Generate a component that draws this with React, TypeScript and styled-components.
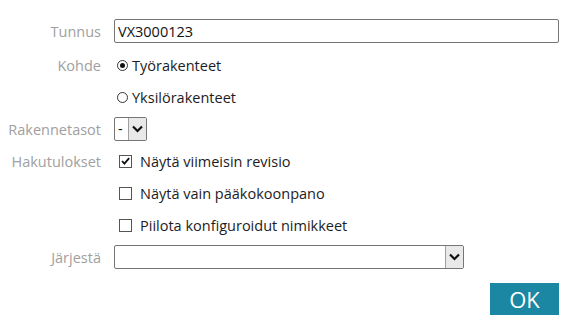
import { createGlobalStyle, styled } from "styled-components"

const Global = createGlobalStyle`
  html, body { margin: 0; padding: 0; background: #fff; }
  body { font-family: "Open Sans", "Noto Sans", sans-serif; font-size: 14.5px; color: #1c1c24; }
`

const Chevron = () => (
  <svg width="11" height="8" viewBox="0 0 11 8">
    <path d="M1 1.5 L5.5 6 L10 1.5" fill="none" stroke="#111" strokeWidth="2.2" />
  </svg>
)

const Check = () => (
  <svg width="12" height="12" viewBox="0 0 12 12">
    <path d="M2.2 6 L4.8 8.8 L10 2.8" fill="none" stroke="#111" strokeWidth="2" />
  </svg>
)

const Home = () => {
  return (
    <Form>
      <Global />
      <Row>
        <Label>Tunnus</Label>
        <TextInput defaultValue="VX3000123" />
      </Row>
      <Row $top={2}>
        <Label>Kohde</Label>
        <Option>
          <Radio $on />
          Työrakenteet
        </Option>
      </Row>
      <Row>
        <Label />
        <Option>
          <Radio />
          Yksilörakenteet
        </Option>
      </Row>
      <Row>
        <Label>Rakennetasot</Label>
        <Select $width={33}>
          <SelectValue>-</SelectValue>
          <Arrow>
            <Chevron />
          </Arrow>
        </Select>
      </Row>
      <Row>
        <Label>Hakutulokset</Label>
        <Option $gap={8}>
          <Box>
            <Check />
          </Box>
          Näytä viimeisin revisio
        </Option>
      </Row>
      <Row>
        <Label />
        <Option $gap={8}>
          <Box />
          Näytä vain pääkokoonpano
        </Option>
      </Row>
      <Row>
        <Label />
        <Option $gap={8}>
          <Box />
          Piilota konfiguroidut nimikkeet
        </Option>
      </Row>
      <Row>
        <Label>Järjestä</Label>
        <Select $width={350}>
          <SelectValue />
          <Arrow>
            <Chevron />
          </Arrow>
        </Select>
      </Row>
      <Footer>
        <OkButton>OK</OkButton>
      </Footer>
    </Form>
  )
}

export default Home

const Form = styled.div`
  width: 559px;
  padding-top: 19px;
  display: flex;
  flex-direction: column;
  gap: 8px;
`

const Row = styled.div<{ $top?: number }>`
  height: 24px;
  display: flex;
  align-items: center;
  gap: 13px;
  margin-top: ${(p) => p.$top ?? 0}px;
`

const Label = styled.div`
  width: 101px;
  flex-shrink: 0;
  text-align: right;
  color: #a0a0a0;
`

const TextInput = styled.input`
  flex: 1;
  box-sizing: border-box;
  height: 24px;
  border: 1px solid #767676;
  border-radius: 2px;
  padding: 0 3px;
  font-family: inherit;
  font-size: 14.5px;
  color: #111;
  outline: none;
`

const Option = styled.div<{ $gap?: number }>`
  display: flex;
  align-items: center;
  gap: ${(p) => p.$gap ?? 4}px;
  padding-left: ${(p) => (p.$gap ? 5 : 3)}px;
`

const Radio = styled.span<{ $on?: boolean }>`
  width: 11px;
  height: 11px;
  box-sizing: border-box;
  border: 1px solid #333;
  border-radius: 50%;
  display: flex;
  align-items: center;
  justify-content: center;
  &::after {
    content: "";
    width: 5px;
    height: 5px;
    border-radius: 50%;
    background: #111;
    display: ${(p) => (p.$on ? "block" : "none")};
  }
`

const Box = styled.span`
  width: 13px;
  height: 13px;
  box-sizing: border-box;
  border: 1px solid #555;
  display: flex;
  align-items: center;
  justify-content: center;
`

const Select = styled.div<{ $width: number }>`
  width: ${(p) => p.$width}px;
  height: 24px;
  box-sizing: border-box;
  border: 1px solid #767676;
  border-radius: 2px;
  display: flex;
`

const SelectValue = styled.div`
  flex: 1;
  padding-left: 3px;
  line-height: 22px;
  color: #111;
`

const Arrow = styled.div`
  width: 17px;
  background: #e9e9e9;
  border-left: 1px solid #a0a0a0;
  display: flex;
  align-items: center;
  justify-content: center;
`

const Footer = styled.div`
  display: flex;
  justify-content: flex-end;
  margin-top: 6px;
`

const OkButton = styled.div`
  width: 69px;
  height: 32px;
  background: #1b87a3;
  color: #fff;
  font-size: 22px;
  display: flex;
  align-items: center;
  justify-content: center;
  cursor: pointer;
`
